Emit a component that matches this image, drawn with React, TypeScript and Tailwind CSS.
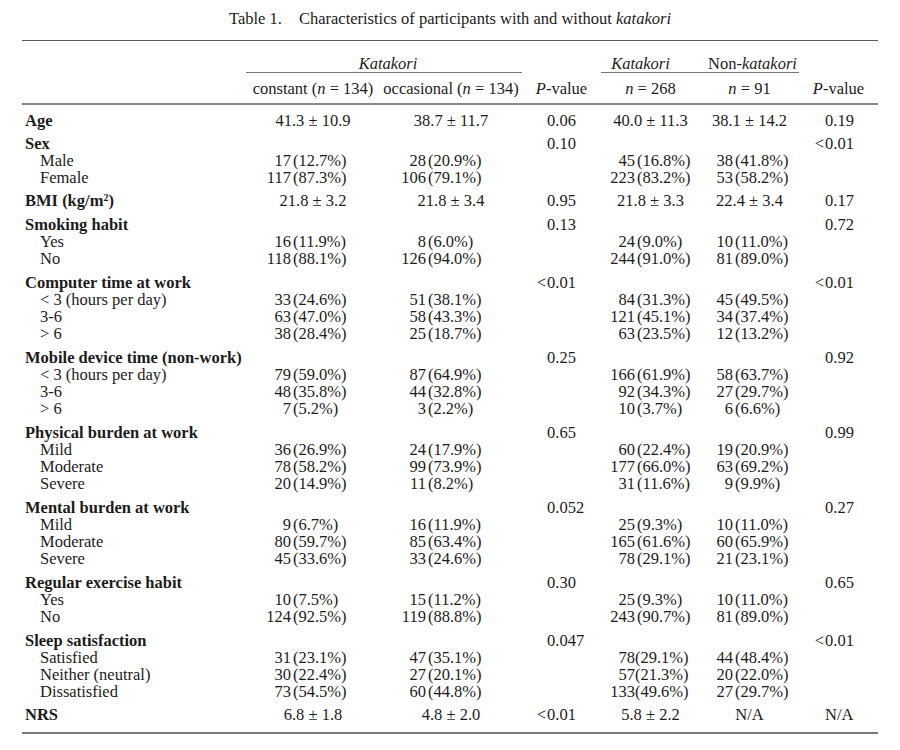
import React from "react";

type Val =
  | { k: "m"; v: string }
  | { k: "c"; n: string; p: string; tight?: boolean }
  | null;

type Row = {
  label: React.ReactNode;
  head?: boolean;
  mt?: string;
  c1: Val;
  c2: Val;
  p1?: string;
  c3: Val;
  c4: Val;
  p2?: string;
};

const m = (v: string): Val => ({ k: "m", v });
const c = (s: string): Val => {
  const tight = !s.includes(" (");
  const i = s.indexOf("(");
  return { k: "c", n: s.slice(0, i).trim(), p: s.slice(i), tight };
};

const rows: Row[] = [
  { label: "Age", head: true, c1: m("41.3 ± 10.9"), c2: m("38.7 ± 11.7"), p1: "0.06", c3: m("40.0 ± 11.3"), c4: m("38.1 ± 14.2"), p2: "0.19" },
  { label: "Sex", head: true, mt: "mt-[6px]", c1: null, c2: null, p1: "0.10", c3: null, c4: null, p2: "<0.01" },
  { label: "Male", c1: c("17 (12.7%)"), c2: c("28 (20.9%)"), c3: c("45 (16.8%)"), c4: c("38 (41.8%)") },
  { label: "Female", c1: c("117 (87.3%)"), c2: c("106 (79.1%)"), c3: c("223 (83.2%)"), c4: c("53 (58.2%)") },
  {
    label: (
      <>
        BMI (kg/m<span className="text-[10px] align-top leading-[12px]">2</span>)
      </>
    ),
    head: true,
    mt: "mt-[6px]",
    c1: m("21.8 ± 3.2"),
    c2: m("21.8 ± 3.4"),
    p1: "0.95",
    c3: m("21.8 ± 3.3"),
    c4: m("22.4 ± 3.4"),
    p2: "0.17",
  },
  { label: "Smoking habit", head: true, mt: "mt-[7px]", c1: null, c2: null, p1: "0.13", c3: null, c4: null, p2: "0.72" },
  { label: "Yes", c1: c("16 (11.9%)"), c2: c("8 (6.0%)"), c3: c("24 (9.0%)"), c4: c("10 (11.0%)") },
  { label: "No", c1: c("118 (88.1%)"), c2: c("126 (94.0%)"), c3: c("244 (91.0%)"), c4: c("81 (89.0%)") },
  { label: "Computer time at work", head: true, mt: "mt-[7px]", c1: null, c2: null, p1: "<0.01", c3: null, c4: null, p2: "<0.01" },
  { label: "< 3 (hours per day)", c1: c("33 (24.6%)"), c2: c("51 (38.1%)"), c3: c("84 (31.3%)"), c4: c("45 (49.5%)") },
  { label: "3-6", c1: c("63 (47.0%)"), c2: c("58 (43.3%)"), c3: c("121 (45.1%)"), c4: c("34 (37.4%)") },
  { label: "> 6", c1: c("38 (28.4%)"), c2: c("25 (18.7%)"), c3: c("63 (23.5%)"), c4: c("12 (13.2%)") },
  { label: "Mobile device time (non-work)", head: true, mt: "mt-[7px]", c1: null, c2: null, p1: "0.25", c3: null, c4: null, p2: "0.92" },
  { label: "< 3 (hours per day)", c1: c("79 (59.0%)"), c2: c("87 (64.9%)"), c3: c("166 (61.9%)"), c4: c("58 (63.7%)") },
  { label: "3-6", c1: c("48 (35.8%)"), c2: c("44 (32.8%)"), c3: c("92 (34.3%)"), c4: c("27 (29.7%)") },
  { label: "> 6", c1: c("7 (5.2%)"), c2: c("3 (2.2%)"), c3: c("10 (3.7%)"), c4: c("6 (6.6%)") },
  { label: "Physical burden at work", head: true, mt: "mt-[7px]", c1: null, c2: null, p1: "0.65", c3: null, c4: null, p2: "0.99" },
  { label: "Mild", c1: c("36 (26.9%)"), c2: c("24 (17.9%)"), c3: c("60 (22.4%)"), c4: c("19 (20.9%)") },
  { label: "Moderate", c1: c("78 (58.2%)"), c2: c("99 (73.9%)"), c3: c("177 (66.0%)"), c4: c("63 (69.2%)") },
  { label: "Severe", c1: c("20 (14.9%)"), c2: c("11 (8.2%)"), c3: c("31 (11.6%)"), c4: c("9 (9.9%)") },
  { label: "Mental burden at work", head: true, mt: "mt-[7px]", c1: null, c2: null, p1: "0.052", c3: null, c4: null, p2: "0.27" },
  { label: "Mild", c1: c("9 (6.7%)"), c2: c("16 (11.9%)"), c3: c("25 (9.3%)"), c4: c("10 (11.0%)") },
  { label: "Moderate", c1: c("80 (59.7%)"), c2: c("85 (63.4%)"), c3: c("165 (61.6%)"), c4: c("60 (65.9%)") },
  { label: "Severe", c1: c("45 (33.6%)"), c2: c("33 (24.6%)"), c3: c("78 (29.1%)"), c4: c("21 (23.1%)") },
  { label: "Regular exercise habit", head: true, mt: "mt-[7px]", c1: null, c2: null, p1: "0.30", c3: null, c4: null, p2: "0.65" },
  { label: "Yes", c1: c("10 (7.5%)"), c2: c("15 (11.2%)"), c3: c("25 (9.3%)"), c4: c("10 (11.0%)") },
  { label: "No", c1: c("124 (92.5%)"), c2: c("119 (88.8%)"), c3: c("243 (90.7%)"), c4: c("81 (89.0%)") },
  { label: "Sleep satisfaction", head: true, mt: "mt-[7px]", c1: null, c2: null, p1: "0.047", c3: null, c4: null, p2: "<0.01" },
  { label: "Satisfied", c1: c("31 (23.1%)"), c2: c("47 (35.1%)"), c3: c("78(29.1%)"), c4: c("44 (48.4%)") },
  { label: "Neither (neutral)", c1: c("30 (22.4%)"), c2: c("27 (20.1%)"), c3: c("57(21.3%)"), c4: c("20 (22.0%)") },
  { label: "Dissatisfied", c1: c("73 (54.5%)"), c2: c("60 (44.8%)"), c3: c("133(49.6%)"), c4: c("27 (29.7%)") },
  { label: "NRS", head: true, mt: "mt-[6px]", c1: m("6.8 ± 1.8"), c2: m("4.8 ± 2.0"), p1: "<0.01", c3: m("5.8 ± 2.2"), c4: m("N/A"), p2: "N/A" },
];

function ValCell({ v, numW }: { v: Val; numW: string }) {
  if (!v) return <div />;
  if (v.k === "m") return <div className="text-center whitespace-nowrap">{v.v}</div>;
  return (
    <div className="flex whitespace-nowrap">
      <span className={`${numW} text-right shrink-0`}>{v.n}</span>
      <span className={v.tight ? "" : "pl-[2px]"}>{v.p}</span>
    </div>
  );
}

function PCell({ v, preW }: { v?: string; preW: string }) {
  if (!v) return <div />;
  const lt = v.startsWith("<");
  return (
    <div className="flex whitespace-nowrap">
      <span className={`${preW} text-right shrink-0 pr-[1px]`}>{lt ? "<" : ""}</span>
      <span>{lt ? v.slice(1) : v}</span>
    </div>
  );
}

const GRID = "grid grid-cols-[224px_134px_142px_79px_99px_99px_79px]";

export default function App() {
  return (
    <div
      className="w-[900px] h-[750px] bg-white text-[#1c1c1c] text-[16.5px] leading-[17px]"
      style={{ fontFamily: '"Liberation Serif", "Times New Roman", serif' }}
    >
      <div className="h-[40px] pt-[10px] flex justify-center whitespace-nowrap">
        <span>Table 1.</span>
        <span className="pl-[17px]">
          Characteristics of participants with and without <i>katakori</i>
        </span>
      </div>
      <div className="w-[856px] mx-auto">
        <div className="h-[1px] bg-[#5a5a5a]" />
        {/* header row 1 */}
        <div className={GRID}>
          <div />
          <div className="col-span-2 border-b border-[#777] pt-[14px] pb-[0px] pl-[8px] text-center italic">
            Katakori
          </div>
          <div />
          <div className="border-b border-[#777] pt-[14px] pb-[0px] pr-[20px] text-center italic">
            Katakori
          </div>
          <div className="border-b border-[#777] pt-[14px] pb-[0px] pl-[6px] text-center whitespace-nowrap">
            Non-<i>katakori</i>
          </div>
          <div />
        </div>
        {/* header row 2 */}
        <div className={`${GRID} pt-[7px] pb-[6px] whitespace-nowrap`}>
          <div />
          <div className="text-center">
            constant (<i>n</i> = 134)
          </div>
          <div className="text-center">
            occasional (<i>n</i> = 134)
          </div>
          <div className="text-center">
            <i>P</i>-value
          </div>
          <div className="text-center">
            <i>n</i> = 268
          </div>
          <div className="text-center">
            <i>n</i> = 91
          </div>
          <div className="text-center">
            <i>P</i>-value
          </div>
        </div>
        <div className="h-[2px] bg-[#8a8a8a]" />
        {/* body */}
        <div className="pt-[7px] pb-[9px]">
          {rows.map((r, i) => (
            <div key={i} className={`${GRID} h-[17px] ${r.mt ?? ""}`}>
              <div className={r.head ? "font-bold pl-[3px] whitespace-nowrap" : "pl-[18px] whitespace-nowrap"}>
                {r.label}
              </div>
              <ValCell v={r.c1} numW="w-[45px]" />
              <ValCell v={r.c2} numW="w-[46px]" />
              <PCell v={r.p1} preW="w-[25px]" />
              <ValCell v={r.c3} numW="w-[34px]" />
              <ValCell v={r.c4} numW="w-[33px]" />
              <PCell v={r.p2} preW="w-[26px]" />
            </div>
          ))}
        </div>
        <div className="h-[2px] bg-[#7a7a7a]" />
      </div>
    </div>
  );
}
